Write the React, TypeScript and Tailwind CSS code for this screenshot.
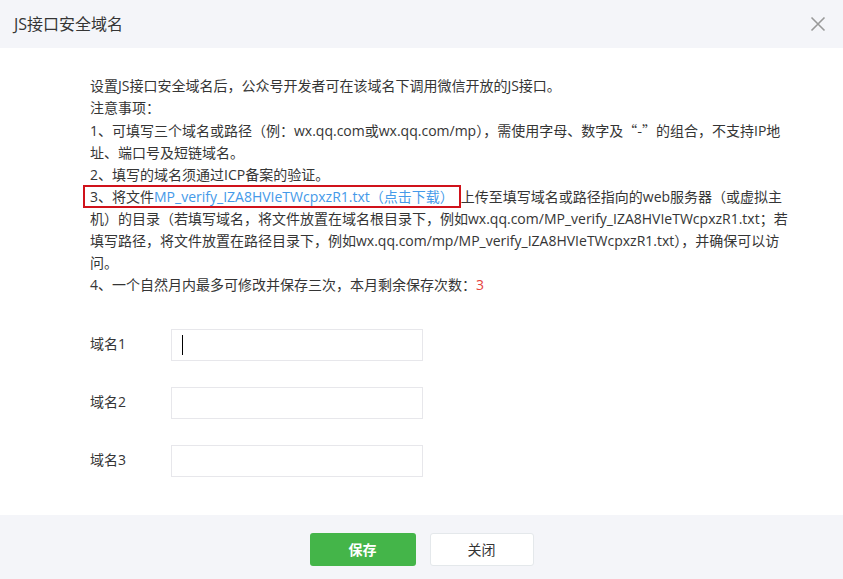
import React from 'react';

const FILE_NAME = 'MP_verify_IZA8HVIeTWcpxzR1.txt';

const fontStack = "font-['Open_Sans','Noto_Sans_CJK_SC',sans-serif]";
const cjk = "font-['Noto_Sans_CJK_SC',sans-serif]";

export default function App() {
  return (
    <div className={`h-screen w-full flex flex-col bg-white text-[#353535] ${fontStack}`}>
      {/* header */}
      <div className="h-12 shrink-0 flex items-center justify-between bg-[#f4f5f9] pl-[14px] pr-[17px]">
        <h2 className="text-[16px]">JS接口安全域名</h2>
        <button className="text-[#999] hover:text-[#666]">
          <svg width="16" height="16" viewBox="0 0 16 16" fill="none" stroke="currentColor" strokeWidth="1.6">
            <path d="M1.5 1.5 L14.5 14.5 M14.5 1.5 L1.5 14.5" />
          </svg>
        </button>
      </div>

      {/* body */}
      <div className="flex-1 pl-[90px] pt-[27px]">
        <div className="text-[14px] leading-[22px] whitespace-nowrap">
          <div>设置JS接口安全域名后，公众号开发者可在该域名下调用微信开放的JS接口。</div>
          <div>注意事项：</div>
          <div>
            1、可填写三个域名或路径（例：wx.qq.com或wx.qq.com/mp），需使用字母、数字及<span className={cjk}>“-”</span>的组合，不支持IP地
          </div>
          <div>址、端口号及短链域名。</div>
          <div>2、填写的域名须通过ICP备案的验证。</div>
          <div>
            <span className="ml-[-7px] pl-[5px] pr-[5px] border-2 border-[#d0121b]">
              3、将文件
              <a href="#" className="text-[#459ae9] no-underline">
                {FILE_NAME}（点击下载）
              </a>
            </span>
            上传至填写域名或路径指向的web服务器（或虚拟主
          </div>
          <div>机）的目录（若填写域名，将文件放置在域名根目录下，例如wx.qq.com/{FILE_NAME}；若</div>
          <div>填写路径，将文件放置在路径目录下，例如wx.qq.com/mp/{FILE_NAME}），并确保可以访</div>
          <div>问。</div>
          <div>
            4、一个自然月内最多可修改并保存三次，本月剩余保存次数：<span className="text-[#e64340]">3</span>
          </div>
        </div>

        <div className="mt-[33px] flex flex-col gap-[26px]">
          {[1, 2, 3].map((n) => (
            <div key={n} className="flex items-center">
              <label className="w-[81px] text-[14px] leading-[20px] -mt-[3px]">域名{n}</label>
              <div className="relative">
                <input
                  type="text"
                  className="w-[252px] h-[32px] border border-[#e7e7eb] px-[10px] text-[14px] outline-none"
                />
                {n === 1 && (
                  <span className="absolute left-[11px] top-[6px] h-[20px] w-px bg-black" />
                )}
              </div>
            </div>
          ))}
        </div>
      </div>

      {/* footer */}
      <div className="h-16 shrink-0 bg-[#f4f5f9] flex justify-center items-start pt-[18px] gap-[14px]">
        <button className="w-[106px] h-[33px] rounded-[3px] bg-[#44b549] text-white text-[14px] font-bold">
          保存
        </button>
        <button className="w-[104px] h-[33px] rounded-[3px] bg-white border border-[#e4e8eb] text-[14px]">
          关闭
        </button>
      </div>
    </div>
  );
}
